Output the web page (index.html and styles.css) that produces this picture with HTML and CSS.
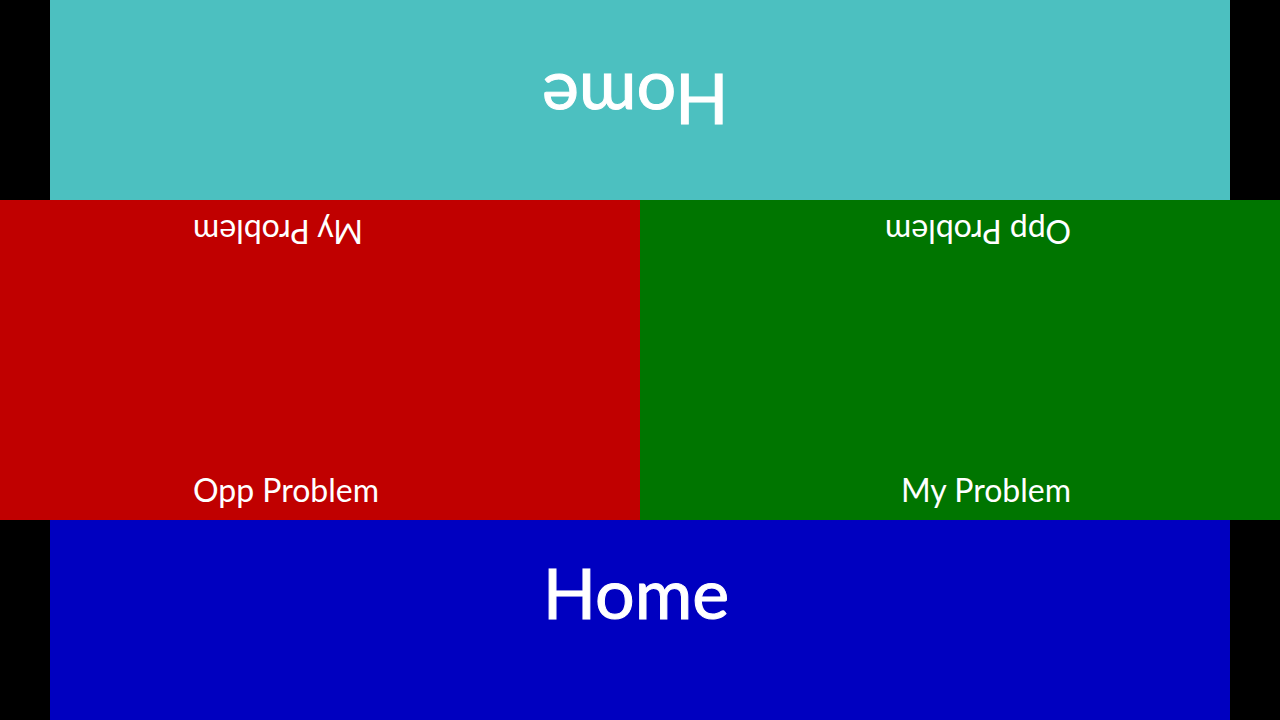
FILE: index.html
```html
<!DOCTYPE html>
<html lang="en">
<head>
<meta charset="utf-8">
<title>Home</title>
<link rel="stylesheet" href="styles.css">
</head>
<body>
<main class="board">
  <section class="home home-top"><h1 class="title flipped">Home</h1></section>
  <div class="middle">
    <section class="zone zone-red">
      <p class="label flipped">My Problem</p>
      <p class="label label-near">Opp Problem</p>
    </section>
    <section class="zone zone-green">
      <p class="label flipped">Opp Problem</p>
      <p class="label label-near">My Problem</p>
    </section>
  </div>
  <section class="home home-bottom"><h1 class="title">Home</h1></section>
</main>
</body>
</html>
```
FILE: styles.css
```css
* { box-sizing: border-box; }
body {
  margin: 0;
  background: #000;
  color: #fff;
  font-family: Lato, "Open Sans", sans-serif;
}
.board {
  display: grid;
  grid-template-rows: 200px 1fr 200px;
  min-height: 100vh;
}
.home {
  display: flex;
  justify-content: center;
  margin: 0 50px;
  padding-right: 8px;
}
.home-top { background: #4cc0c0; align-items: center; padding-top: 2px; padding-right: 10px; }
.home-bottom { background: #0000c0; align-items: flex-start; padding-top: 30px; }
.title {
  margin: 0;
  font-size: 70px;
  line-height: 84px;
  font-weight: 400;
  -webkit-text-stroke: 1px #fff;
}
.middle { display: grid; grid-template-columns: 1fr 1fr; }
.zone {
  display: flex;
  flex-direction: column;
  justify-content: space-between;
  padding: 12px 0 10px;
}
.zone-red { background: #c00000; padding-right: 84px; }
.zone-green { background: #007500; padding-left: 36px; }
.label {
  margin: 0;
  font-size: 32px;
  line-height: 40px;
  text-align: center;
}
.label-near { padding-left: 16px; }
.flipped { transform: rotate(180deg); }
```
